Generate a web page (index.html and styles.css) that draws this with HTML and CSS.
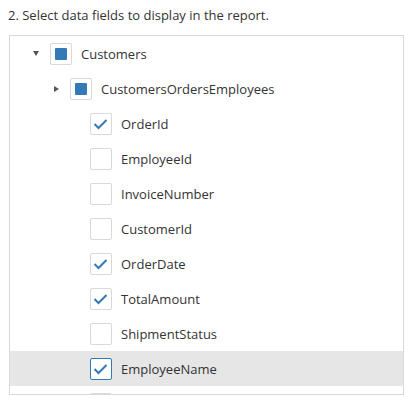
FILE: index.html
```html
<!DOCTYPE html>
<html>
<head>
<meta charset="utf-8">
<link rel="stylesheet" href="styles.css">
</head>
<body>
<div class="title">2. Select data fields to display in the report.</div>
<div class="tree">
  <div class="row l0">
    <span class="toggle"><span class="tri-down"></span></span>
    <span class="cb"><span class="ind"></span></span>
    <span class="label">Customers</span>
  </div>
  <div class="row l1">
    <span class="toggle"><span class="tri-right"></span></span>
    <span class="cb"><span class="ind"></span></span>
    <span class="label">CustomersOrdersEmployees</span>
  </div>
  <div class="row l2">
    <span class="cb"><svg class="chk" viewBox="0 0 22 22"><path d="M4.5 11 L8.5 15 L16.5 7"/></svg></span>
    <span class="label">OrderId</span>
  </div>
  <div class="row l2">
    <span class="cb"></span>
    <span class="label">EmployeeId</span>
  </div>
  <div class="row l2">
    <span class="cb"></span>
    <span class="label">InvoiceNumber</span>
  </div>
  <div class="row l2">
    <span class="cb"></span>
    <span class="label">CustomerId</span>
  </div>
  <div class="row l2">
    <span class="cb"><svg class="chk" viewBox="0 0 22 22"><path d="M4.5 11 L8.5 15 L16.5 7"/></svg></span>
    <span class="label">OrderDate</span>
  </div>
  <div class="row l2">
    <span class="cb"><svg class="chk" viewBox="0 0 22 22"><path d="M4.5 11 L8.5 15 L16.5 7"/></svg></span>
    <span class="label">TotalAmount</span>
  </div>
  <div class="row l2">
    <span class="cb"></span>
    <span class="label">ShipmentStatus</span>
  </div>
  <div class="row l2 hover">
    <span class="cb focus"><svg class="chk" viewBox="0 0 22 22"><path d="M4.5 11 L8.5 15 L16.5 7"/></svg></span>
    <span class="label">EmployeeName</span>
  </div>
  <div class="row l2">
    <span class="cb"></span>
  </div>
</div>
</body>
</html>
```
FILE: styles.css
```css
html, body {
  margin: 0;
  padding: 0;
  background: #fff;
}
body {
  font-family: "Open Sans", "Noto Sans", sans-serif;
  font-size: 13px;
  color: #333;
}
.title {
  padding: 5px 8px 0 8px;
  height: 35px;
  line-height: 20px;
  box-sizing: border-box;
}
.tree {
  margin-left: 9px;
  width: 395px;
  height: 360px;
  border: 1px solid #d9d9d9;
  box-sizing: border-box;
  overflow: hidden;
}
.row {
  display: flex;
  align-items: center;
  height: 35px;
  flex-shrink: 0;
}
.row.l0 { padding-left: 20px; }
.row.l1 { padding-left: 40px; }
.row.l2 { padding-left: 80px; }
.row.hover { background: #e6e6e6; }
.toggle {
  width: 20px;
  height: 20px;
  display: flex;
  align-items: center;
  padding-left: 3px;
  box-sizing: border-box;
}
.tri-down {
  width: 0;
  height: 0;
  border-left: 3px solid transparent;
  border-right: 3px solid transparent;
  border-top: 5px solid #555;
}
.tri-right {
  width: 0;
  height: 0;
  border-top: 3px solid transparent;
  border-bottom: 3px solid transparent;
  border-left: 5px solid #555;
  margin-left: 1px;
}
.cb {
  width: 22px;
  height: 22px;
  box-sizing: border-box;
  border: 1px solid #d9d9d9;
  border-radius: 2px;
  background: #fff;
  display: flex;
  align-items: center;
  justify-content: center;
  flex-shrink: 0;
}
.cb.focus { border-color: #337ab7; }
.ind {
  width: 12px;
  height: 12px;
  background: #337ab7;
  border-radius: 1px;
}
.chk {
  width: 22px;
  height: 22px;
  display: block;
  margin: -1px;
}
.chk path {
  fill: none;
  stroke: #337ab7;
  stroke-width: 2;
}
.label {
  margin-left: 9px;
  white-space: nowrap;
}
```
